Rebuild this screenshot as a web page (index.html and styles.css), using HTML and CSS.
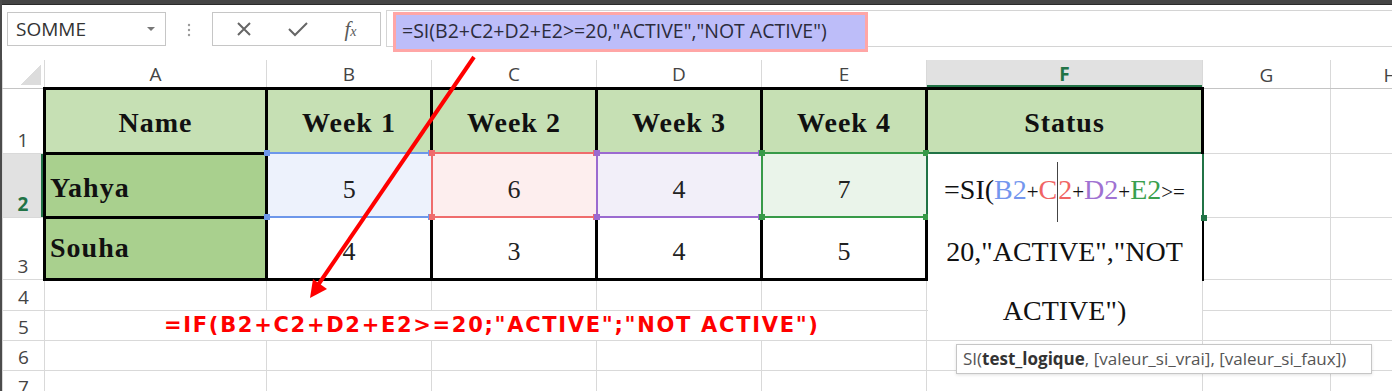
FILE: index.html
```html
<!DOCTYPE html>
<html lang="fr">
<head>
  <meta charset="UTF-8">
  <meta name="viewport" content="width=device-width, initial-scale=1.0">
  <title>Classeur - SI</title>
  <link rel="stylesheet" href="styles.css">
</head>
<body>
<div class="app">
  <div class="topbar"></div>

  <!-- barre de formule -->
  <div class="toolbar">
    <div class="namebox"><span>SOMME</span><span class="caret"></span></div>
    <div class="grip">
      <svg width="4" height="14" viewBox="0 0 4 14"><circle cx="2" cy="2" r="1.2"/><circle cx="2" cy="7" r="1.2"/><circle cx="2" cy="12" r="1.2"/></svg>
    </div>
    <div class="fbtns">
      <svg width="16" height="16" viewBox="0 0 16 16"><path d="M2 2 L14 14 M14 2 L2 14"/></svg>
      <svg width="22" height="16" viewBox="0 0 22 16"><path d="M2 8 L8 14 L20 2"/></svg>
      <span class="fx">f<small>x</small></span>
    </div>
    <div class="formula">
      <span class="formula-text">=SI(B2+C2+D2+E2&gt;=20,"ACTIVE","NOT ACTIVE")</span>
    </div>
  </div>

  <!-- feuille -->
  <table class="sheet">
    <colgroup>
      <col class="c-rh"><col class="c-a"><col class="c-w"><col class="c-w"><col class="c-w"><col class="c-w"><col class="c-f"><col class="c-g"><col class="c-h">
    </colgroup>
    <tr class="colhead">
      <th class="corner"></th><th>A</th><th>B</th><th>C</th><th>D</th><th>E</th><th class="sel">F</th><th>G</th><th>H</th>
    </tr>
    <tr class="r1">
      <th class="rh">1</th>
      <td class="hd">Name</td>
      <td class="hd open">Week 1</td>
      <td class="hd open">Week 2</td>
      <td class="hd open">Week 3</td>
      <td class="hd open">Week 4</td>
      <td class="hd open">Status</td>
      <td></td><td></td>
    </tr>
    <tr class="r2">
      <th class="rh sel">2</th>
      <td class="name">Yahya</td>
      <td class="num pick blue">5</td>
      <td class="num pick red">6</td>
      <td class="num pick purple">4</td>
      <td class="num pick green">7</td>
      <td class="active">
        <div class="editor">=SI(<span class="t-blue">B2</span><span class="op">+</span><span class="t-red">C<span class="cursor"></span>2</span><span class="op">+</span><span class="t-purple">D2</span><span class="op">+</span><span class="t-green">E2</span><span class="op">&gt;=</span><br>20,"ACTIVE","NOT<br>ACTIVE")</div>
      </td>
      <td></td><td></td>
    </tr>
    <tr class="r3">
      <th class="rh">3</th>
      <td class="name low">Souha</td>
      <td class="num box">4</td>
      <td class="num box">3</td>
      <td class="num box">4</td>
      <td class="num box">5</td>
      <td class="box"></td>
      <td></td><td></td>
    </tr>
    <tr class="r4">
      <th class="rh">4</th><td></td><td></td><td></td><td></td><td></td><td></td><td></td><td></td>
    </tr>
    <tr class="rn">
      <th class="rh">5</th>
      <td colspan="5" class="note">=IF(B2+C2+D2+E2&gt;=20;"ACTIVE";"NOT ACTIVE")</td>
      <td></td><td></td><td></td>
    </tr>
    <tr class="rn">
      <th class="rh">6</th><td></td><td></td><td></td><td></td><td></td><td></td><td></td><td></td>
    </tr>
    <tr class="rn">
      <th class="rh">7</th><td></td><td></td><td></td><td></td><td></td><td></td><td></td><td></td>
    </tr>
  </table>

  <!-- flèche d'annotation -->
  <svg class="arrow" width="1392" height="391" viewBox="0 0 1392 391">
    <line x1="474" y1="57" x2="318" y2="285"/>
    <polygon points="310,298 313,279 327,289"/>
  </svg>

  <div class="tooltip">SI(<b>test_logique</b>, [valeur_si_vrai], [valeur_si_faux])</div>
</div>
</body>
</html>
```

FILE: styles.css
```css
body {
  margin: 0;
  padding: 0;
  background-color: #fff;
  font-family: "Open Sans", "Liberation Sans", sans-serif;
  overflow: hidden;
}

.app {
  position: relative;
  width: 1392px;
  height: 391px;
  box-sizing: border-box;
  border-left: 2px solid #4b4b4b;
  overflow: hidden;
}

.topbar {
  height: 4px;
  background-color: #454545;
  border-bottom: 1px solid #2a2a2a;
}

/* barre de formule */
.toolbar {
  display: flex;
  align-items: flex-start;
  height: 55px;
}

.namebox {
  margin: 7px 0 0 5px;
  width: 159px;
  height: 34px;
  box-sizing: border-box;
  border: 1px solid #c6c6c6;
  display: flex;
  align-items: center;
  justify-content: space-between;
  padding: 0 10px 0 8px;
  font-size: 19px;
  color: #333;
}

.caret {
  width: 0;
  height: 0;
  border-left: 4px solid transparent;
  border-right: 4px solid transparent;
  border-top: 4px solid #777;
}

.grip {
  width: 46px;
  display: flex;
  justify-content: center;
  margin-top: 18px;
}

.grip svg {
  fill: #9a9a9a;
}

.fbtns {
  margin-top: 7px;
  width: 169px;
  height: 34px;
  box-sizing: border-box;
  border: 1px solid #c6c6c6;
  display: flex;
  align-items: center;
  justify-content: space-around;
  padding: 0 6px;
}

.fbtns svg {
  fill: none;
  stroke: #666;
  stroke-width: 2;
}

.fx {
  font-family: "Liberation Serif", serif;
  font-style: italic;
  font-size: 21px;
  color: #5a5a5a;
}

.fx small {
  font-size: 14px;
}

.formula {
  flex: 1;
  margin: 5px 0 0 5px;
  height: 37px;
  box-sizing: border-box;
  border: 1px solid #d4d4d4;
  border-right: none;
  padding: 1px 0 0 6px;
}

.formula-text {
  display: inline-block;
  width: 475px;
  height: 40px;
  box-sizing: border-box;
  padding: 2px 0 0 6px;
  background-color: #bdbdf9;
  border: 3px solid #ffa6a6;
  font-size: 19.5px;
  color: #2c2c3c;
  white-space: nowrap;
}

/* feuille */
.sheet {
  border-collapse: collapse;
  table-layout: fixed;
  width: 1448px;
}

.c-rh { width: 42px; }
.c-a { width: 222px; }
.c-w { width: 165px; }
.c-f { width: 276px; }
.c-g { width: 128px; }
.c-h { width: 120px; }

.sheet th, .sheet td {
  border: 1px solid #d9d9d9;
  padding: 0;
}

.colhead { height: 28px; }
.r1 { height: 65px; }
.r2 { height: 64px; }
.r3 { height: 62px; }
.r4 { height: 31px; }
.rn { height: 30px; }

.colhead th {
  border-top: none;
  border-bottom-color: #c4c4c4;
  font-size: 19px;
  font-weight: normal;
  color: #444;
  vertical-align: bottom;
  padding-bottom: 0;
}

.colhead th.sel {
  background-color: #e1e1e1;
  color: #217346;
  font-weight: bold;
  box-shadow: inset 0 -2px #217346;
}

.corner {
  background: linear-gradient(to bottom right, transparent 50%, #dcdcdc 50%) no-repeat right 3px bottom 3px / 20px 20px;
}

.rh {
  border-left: none;
  border-right-color: #c4c4c4;
  font-size: 19px;
  font-weight: normal;
  color: #444;
  vertical-align: bottom;
  padding-bottom: 2px;
}

.rh.sel {
  background-color: #e1e1e1;
  color: #217346;
  font-weight: bold;
  box-shadow: inset -2px 0 #217346;
}

/* tableau */
.hd {
  background-color: #c6e0b4;
  border: 3px solid #000 !important;
  font-family: "Liberation Serif", serif;
  font-weight: bold;
  font-size: 28px;
  letter-spacing: 1px;
  text-align: center;
  vertical-align: bottom;
  padding-bottom: 13px !important;
  color: #111;
}

.hd.open {
  border-bottom: 1px solid #d9d9d9 !important;
}

.name {
  background-color: #a9d08e;
  border: 3px solid #000 !important;
  font-family: "Liberation Serif", serif;
  font-weight: bold;
  font-size: 28px;
  letter-spacing: 1px;
  vertical-align: bottom;
  padding: 0 0 12px 4px !important;
  color: #111;
}

.name.low {
  padding-bottom: 14px !important;
}

.num {
  font-family: "Liberation Serif", serif;
  font-size: 26px;
  text-align: center;
  vertical-align: bottom;
  padding-bottom: 11px !important;
  color: #222;
}

.box {
  border: 3px solid #000 !important;
  border-top: 1px solid #d9d9d9 !important;
}

.pick {
  position: relative;
  border: 2px solid var(--c) !important;
  border-right-width: 1px !important;
}

.pick::before,
.pick::after {
  content: "";
  position: absolute;
  left: -4px;
  width: 6px;
  height: 6px;
  background-color: var(--c);
  box-shadow: 164px 0 0 var(--c);
}

.pick::before { top: -4px; }
.pick::after { bottom: -4px; }

.blue { --c: #6d97ea; background-color: #edf2fc; }
.red { --c: #ef6c6c; background-color: #fdeeee; }
.purple { --c: #9b6ad0; background-color: #f2eff9; }
.green { --c: #379a48; background-color: #eaf4ea; }

.active {
  position: relative;
  border: 2px solid #217346 !important;
}

.active::after {
  content: "";
  position: absolute;
  right: -5px;
  bottom: -5px;
  width: 6px;
  height: 6px;
  background-color: #217346;
  z-index: 3;
}

.editor {
  position: absolute;
  top: 0;
  left: 0;
  right: 0;
  height: 186px;
  box-sizing: border-box;
  padding-top: 6px;
  background-color: #fff;
  z-index: 2;
  font-family: "Liberation Serif", serif;
  font-size: 28px;
  line-height: 59px;
  text-align: center;
  white-space: nowrap;
  color: #111;
}

.editor .op {
  font-size: 21px;
}

.t-blue { color: #7496ee; }
.t-red { color: #f06464; }
.t-purple { color: #a072d2; }
.t-green { color: #3aa04e; }

.cursor {
  display: inline-block;
  width: 0;
  height: 60px;
  border-left: 1px solid #444;
  vertical-align: middle;
  margin: -20px 0 -18px;
}

.note {
  padding-left: 119px !important;
  font-family: "DejaVu Sans", sans-serif;
  font-weight: bold;
  font-size: 21px;
  letter-spacing: 1.7px;
  color: #ff0000;
  white-space: nowrap;
}

/* annotations */
.arrow {
  position: absolute;
  top: 0;
  left: -2px;
  z-index: 5;
}

.arrow line {
  stroke: #ff0000;
  stroke-width: 4;
}

.arrow polygon {
  fill: #ff0000;
}

.tooltip {
  position: absolute;
  left: 954px;
  top: 344px;
  width: 416px;
  height: 30px;
  box-sizing: border-box;
  border: 1px solid #c6c6c6;
  background-color: #fff;
  box-shadow: 0 1px 3px rgba(0, 0, 0, 0.12);
  padding: 2px 0 0 6px;
  font-size: 17px;
  color: #555;
  white-space: nowrap;
  z-index: 6;
}

.tooltip b {
  color: #333;
}
```
